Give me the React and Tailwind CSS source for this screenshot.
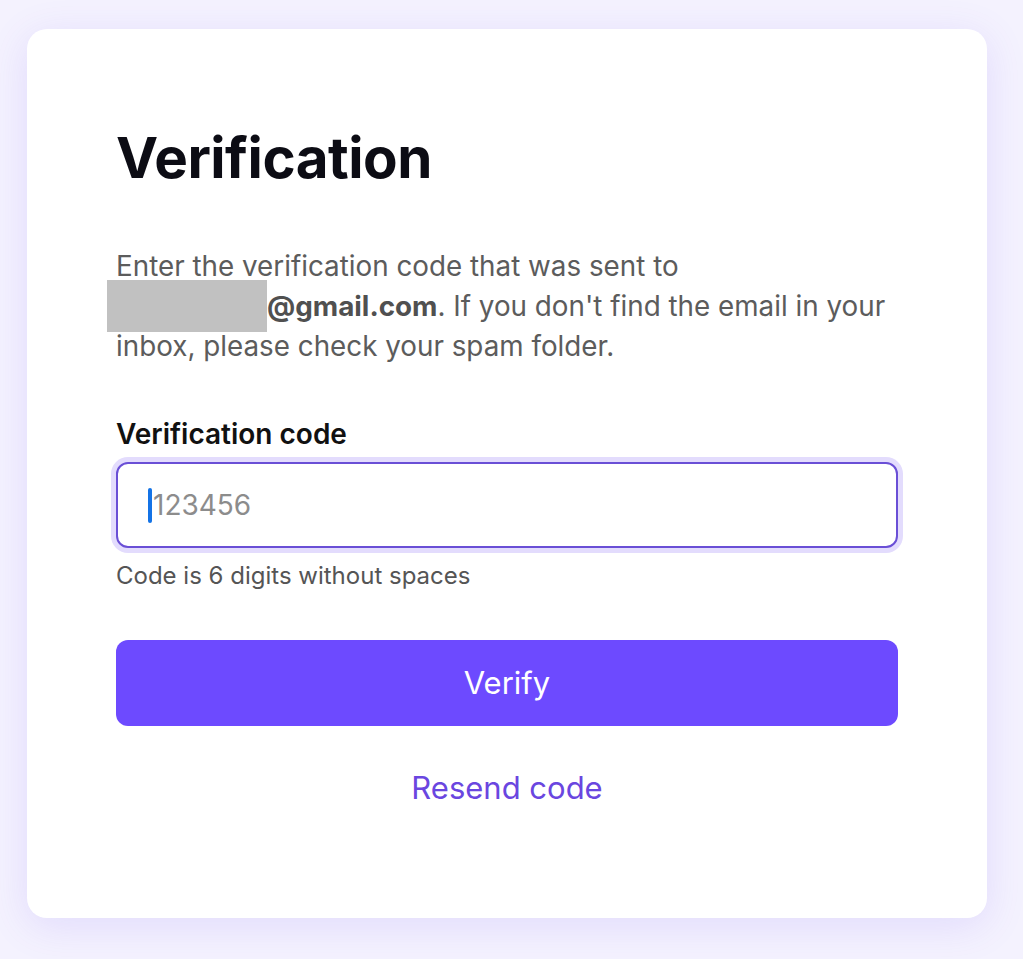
import React, { useState } from 'react';

export default function App() {
  const [code, setCode] = useState('');

  return (
    <div className="min-h-[959px] w-full bg-[#f4f2fe] pt-[29px] pl-[27px] font-['Inter',sans-serif]">
      <div className="w-[960px] h-[889px] bg-white rounded-[20px] shadow-[0_8px_40px_rgba(110,80,240,0.14)] px-[89px] pt-[95px]">
        <h1 className="text-[56.5px] leading-[68px] font-bold text-[#0c0c14] tracking-[-0.5px]">Verification</h1>

        <p className="mt-[54px] text-[27.8px] leading-[40px] text-[#5c5c5c]">
          Enter the verification code that was sent to{' '}
          <span className="whitespace-nowrap">
            <span className="inline-block w-[160px] h-[52px] -mt-[6px] -mb-[6px] -ml-[9px] align-top bg-[#c1c1c1]"></span>
            <span className="font-bold text-[#505050]">@gmail.com</span>.
          </span>{' '}
          If you don't find the email in your inbox, please check your spam folder.
        </p>

        <label className="block mt-[50px] text-[28px] leading-[36px] font-semibold text-[#111111]">Verification code</label>

        <div className="relative mt-[10px]">
          <input
            value={code}
            onChange={(e) => setCode(e.target.value)}
            placeholder="123456"
            className="w-full h-[86px] rounded-[12px] border-2 border-[#6a4fd6] bg-white pl-[35px] pr-[32px] text-[28px] text-[#222] placeholder:text-[#8c8c8c] outline-none shadow-[0_0_0_5px_#e3dcfd]"
          />
          {!code && <span className="pointer-events-none absolute left-[32px] top-[26px] w-[4px] h-[35px] rounded-full bg-[#1473e6]"></span>}
        </div>

        <p className="mt-[12px] text-[24px] leading-[32px] text-[#555555]">Code is 6 digits without spaces</p>

        <button className="mt-[48px] w-full h-[86px] rounded-[12px] bg-[#6d4aff] text-white text-[31px]">
          Verify
        </button>

        <div className="mt-[42px] text-center">
          <button className="text-[31px] leading-[40px] text-[#6a46e0]">Resend code</button>
        </div>
      </div>
    </div>
  );
}
